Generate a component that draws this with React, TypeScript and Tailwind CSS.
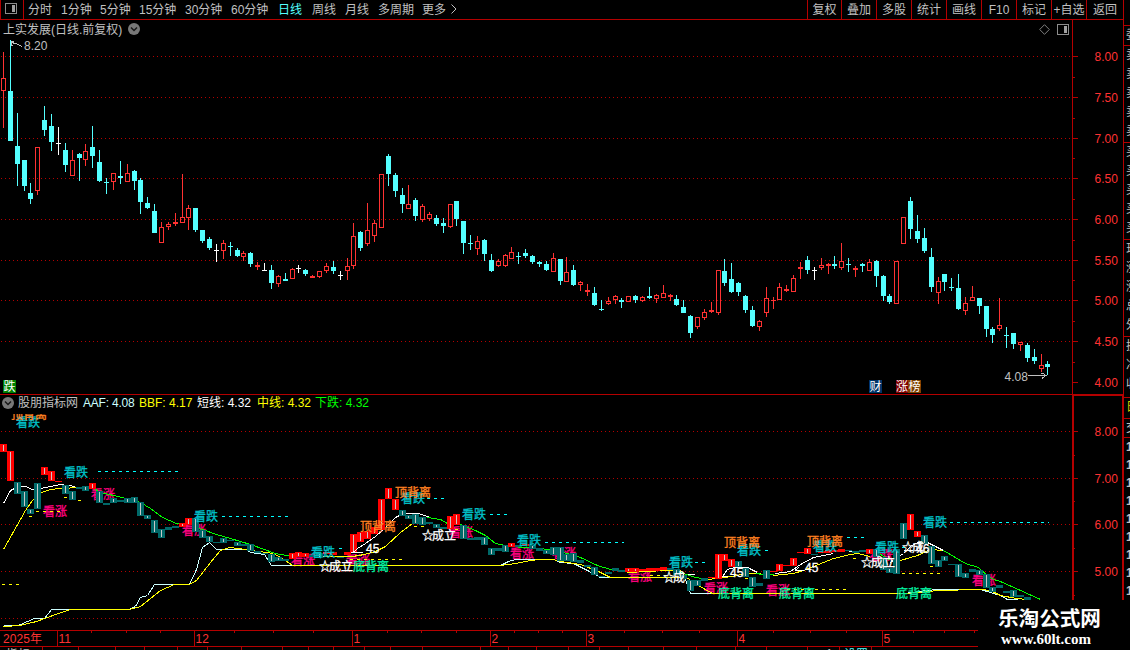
import React from 'react';

const FONT = "font-['Liberation_Sans','Noto_Sans_CJK_SC',sans-serif]";

type Kind = 'u' | 'd' | 'w';
// x, high, low, body top, body bottom, kind (up / down / doji)
type Candle = [number, number, number, number, number, Kind];
// x, top, bottom, kind
type Bar = [number, number, number, 'u' | 'd'];

const candles: Candle[] = [
  [3, 52, 128, 78, 91, 'u'], [10, 40, 141, 91, 141, 'd'], [17, 113, 186, 146, 164, 'd'], [24, 160, 191, 160, 186, 'd'],
  [30, 183, 204, 193, 199, 'd'], [37, 147, 195, 147, 191, 'u'], [44, 106, 136, 120, 130, 'd'], [51, 114, 151, 126, 142, 'd'],
  [58, 127, 155, 143, 144, 'w'], [65, 143, 172, 150, 165, 'd'], [72, 150, 176, 160, 176, 'u'], [79, 153, 181, 154, 158, 'd'],
  [85, 144, 166, 151, 160, 'u'], [92, 126, 168, 147, 156, 'd'], [99, 150, 182, 162, 181, 'd'], [106, 178, 194, 182, 183, 'd'],
  [113, 173, 190, 173, 182, 'u'], [120, 161, 184, 176, 178, 'd'], [127, 164, 182, 173, 182, 'u'], [134, 170, 190, 171, 181, 'd'],
  [140, 178, 214, 180, 202, 'd'], [147, 197, 209, 203, 208, 'd'], [154, 204, 233, 211, 233, 'd'], [161, 222, 243, 227, 243, 'u'],
  [168, 222, 230, 224, 227, 'u'], [175, 213, 226, 222, 224, 'u'], [182, 174, 223, 217, 223, 'u'], [188, 205, 230, 208, 218, 'u'],
  [195, 208, 232, 208, 230, 'd'], [202, 230, 243, 230, 241, 'd'], [209, 237, 250, 239, 248, 'd'], [216, 244, 262, 250, 251, 'w'],
  [223, 240, 259, 243, 251, 'u'], [230, 242, 256, 246, 247, 'd'], [237, 248, 257, 250, 256, 'd'], [243, 251, 261, 253, 257, 'u'],
  [250, 252, 267, 253, 264, 'd'], [257, 262, 270, 265, 267, 'u'], [264, 263, 271, 270, 271, 'w'], [271, 265, 289, 270, 283, 'd'],
  [278, 275, 287, 276, 284, 'u'], [285, 273, 281, 279, 281, 'd'], [292, 268, 279, 269, 279, 'u'], [298, 265, 273, 268, 269, 'w'],
  [305, 269, 276, 270, 274, 'd'], [312, 275, 278, 276, 278, 'u'], [319, 271, 278, 271, 277, 'u'], [326, 263, 273, 266, 271, 'u'],
  [333, 261, 274, 267, 271, 'd'], [340, 271, 280, 275, 276, 'w'], [347, 258, 280, 266, 271, 'u'], [353, 223, 269, 236, 266, 'u'],
  [360, 231, 251, 232, 248, 'd'], [367, 203, 246, 230, 244, 'u'], [374, 220, 242, 223, 236, 'u'], [381, 174, 228, 174, 228, 'u'],
  [388, 154, 186, 156, 174, 'd'], [395, 173, 197, 175, 191, 'd'], [402, 188, 213, 195, 204, 'd'], [408, 185, 209, 204, 209, 'u'],
  [415, 198, 221, 200, 216, 'd'], [422, 204, 222, 206, 220, 'u'], [429, 212, 221, 214, 219, 'u'], [436, 215, 226, 218, 224, 'd'],
  [443, 218, 233, 223, 226, 'd'], [450, 204, 228, 204, 227, 'u'], [456, 201, 226, 201, 219, 'd'], [463, 221, 254, 221, 243, 'd'],
  [470, 235, 250, 243, 244, 'd'], [477, 236, 255, 241, 249, 'u'], [484, 239, 261, 240, 254, 'd'], [491, 254, 272, 260, 271, 'd'],
  [498, 259, 267, 261, 266, 'u'], [505, 254, 267, 255, 266, 'u'], [511, 247, 259, 252, 259, 'u'], [518, 252, 264, 256, 257, 'd'],
  [525, 249, 258, 253, 256, 'd'], [532, 255, 264, 256, 262, 'd'], [539, 261, 267, 262, 264, 'd'], [546, 261, 271, 264, 270, 'd'],
  [553, 253, 272, 258, 272, 'u'], [560, 259, 285, 259, 281, 'd'], [566, 257, 282, 272, 282, 'u'], [573, 265, 286, 270, 285, 'd'],
  [580, 281, 291, 282, 285, 'u'], [587, 284, 296, 290, 292, 'u'], [594, 287, 306, 293, 305, 'd'], [601, 300, 311, 309, 310, 'd'],
  [608, 297, 305, 301, 304, 'u'], [615, 295, 304, 296, 300, 'u'], [621, 298, 308, 300, 302, 'd'], [628, 296, 302, 296, 302, 'u'],
  [635, 295, 303, 296, 300, 'd'], [642, 296, 302, 297, 301, 'u'], [649, 287, 299, 296, 298, 'd'], [656, 294, 303, 295, 299, 'u'],
  [663, 285, 298, 293, 298, 'u'], [670, 294, 301, 295, 297, 'u'], [676, 295, 306, 299, 305, 'd'], [683, 300, 313, 307, 313, 'd'],
  [690, 315, 338, 316, 333, 'd'], [697, 317, 329, 317, 327, 'u'], [704, 309, 320, 312, 318, 'u'], [711, 302, 313, 310, 312, 'u'],
  [718, 270, 315, 270, 313, 'u'], [724, 259, 286, 271, 283, 'd'], [731, 263, 293, 279, 292, 'd'], [738, 282, 296, 283, 292, 'd'],
  [745, 295, 313, 296, 310, 'd'], [752, 306, 327, 310, 326, 'd'], [759, 320, 331, 321, 327, 'u'], [766, 287, 317, 298, 313, 'u'],
  [773, 297, 309, 300, 301, 'u'], [779, 283, 300, 287, 300, 'u'], [786, 285, 292, 289, 291, 'u'], [793, 275, 292, 278, 292, 'u'],
  [800, 262, 279, 267, 269, 'u'], [807, 256, 274, 260, 270, 'd'], [814, 267, 280, 270, 271, 'w'], [821, 258, 270, 265, 268, 'u'],
  [828, 263, 274, 264, 266, 'u'], [834, 256, 269, 264, 266, 'd'], [841, 243, 270, 261, 268, 'u'], [848, 258, 272, 264, 265, 'd'],
  [855, 266, 277, 268, 270, 'u'], [862, 263, 272, 264, 266, 'd'], [869, 259, 271, 262, 271, 'u'], [876, 260, 287, 261, 276, 'd'],
  [883, 275, 301, 276, 296, 'd'], [889, 294, 304, 296, 302, 'd'], [896, 261, 304, 261, 304, 'u'], [903, 217, 244, 217, 244, 'u'],
  [910, 197, 239, 201, 229, 'd'], [917, 215, 243, 231, 239, 'd'], [924, 228, 253, 238, 251, 'd'], [931, 248, 292, 257, 287, 'd'],
  [938, 277, 304, 281, 293, 'u'], [944, 274, 291, 274, 282, 'd'], [951, 278, 291, 287, 288, 'd'], [958, 274, 310, 288, 309, 'd'],
  [965, 297, 315, 303, 311, 'u'], [972, 286, 301, 297, 301, 'u'], [979, 298, 314, 298, 306, 'd'], [986, 306, 337, 306, 329, 'd'],
  [992, 327, 343, 329, 335, 'd'], [999, 298, 331, 325, 329, 'u'], [1006, 327, 348, 335, 336, 'd'], [1013, 333, 349, 333, 344, 'd'],
  [1020, 342, 351, 342, 345, 'u'], [1027, 343, 362, 345, 358, 'd'], [1034, 349, 364, 357, 361, 'd'], [1041, 354, 372, 365, 369, 'u'],
  [1047, 361, 375, 364, 367, 'd'],
];

const bars: Bar[] = [
  [3, 444, 452, 'u'], [10, 451, 481, 'u'], [17, 482, 494, 'd'], [24, 491, 507, 'd'], [30, 509, 514, 'd'], [37, 483, 509, 'd'],
  [44, 467, 475, 'u'], [51, 471, 481, 'u'], [58, 481, 482, 'u'], [65, 485, 494, 'd'], [72, 491, 500, 'd'], [79, 487, 489, 'd'],
  [85, 486, 491, 'd'], [92, 483, 489, 'u'], [99, 491, 503, 'd'], [106, 503, 505, 'd'], [113, 498, 503, 'd'], [120, 500, 502, 'd'],
  [127, 498, 503, 'd'], [134, 497, 503, 'd'], [140, 502, 516, 'd'], [147, 515, 519, 'd'], [154, 520, 533, 'd'], [161, 529, 538, 'd'],
  [168, 527, 530, 'd'], [175, 526, 528, 'd'], [182, 523, 527, 'u'], [188, 518, 525, 'u'], [195, 518, 532, 'd'], [202, 530, 538, 'd'],
  [209, 536, 542, 'd'], [216, 542, 543, 'd'], [223, 538, 543, 'd'], [230, 540, 541, 'd'], [237, 542, 546, 'd'], [243, 544, 546, 'd'],
  [250, 544, 551, 'd'], [257, 551, 553, 'd'], [264, 553, 554, 'd'], [271, 554, 562, 'd'], [278, 557, 561, 'd'], [285, 559, 561, 'd'],
  [292, 553, 559, 'u'], [298, 552, 557, 'u'], [305, 553, 557, 'u'], [312, 555, 557, 'd'], [319, 553, 558, 'd'], [326, 552, 554, 'u'],
  [333, 552, 555, 'u'], [340, 557, 558, 'd'], [347, 552, 555, 'u'], [353, 534, 552, 'u'], [360, 532, 542, 'u'], [367, 531, 539, 'u'],
  [374, 527, 534, 'u'], [381, 499, 530, 'u'], [388, 488, 499, 'u'], [395, 499, 510, 'u'], [402, 510, 516, 'd'], [408, 515, 519, 'd'],
  [415, 514, 524, 'd'], [422, 517, 525, 'd'], [429, 522, 524, 'd'], [436, 524, 528, 'd'], [443, 527, 529, 'd'], [450, 516, 529, 'u'],
  [456, 514, 525, 'u'], [463, 525, 539, 'd'], [470, 538, 540, 'd'], [477, 537, 540, 'd'], [484, 537, 545, 'd'], [491, 548, 555, 'd'],
  [498, 548, 551, 'd'], [505, 545, 552, 'd'], [511, 543, 547, 'u'], [518, 545, 547, 'd'], [525, 544, 546, 'u'], [532, 545, 549, 'd'],
  [539, 548, 551, 'd'], [546, 550, 554, 'd'], [553, 547, 555, 'd'], [560, 547, 561, 'd'], [566, 554, 561, 'd'], [573, 553, 562, 'd'],
  [580, 560, 563, 'd'], [587, 565, 567, 'd'], [594, 567, 575, 'd'], [601, 576, 577, 'd'], [608, 572, 574, 'd'], [615, 568, 571, 'd'],
  [621, 570, 572, 'd'], [628, 568, 572, 'u'], [635, 568, 572, 'u'], [642, 569, 571, 'u'], [649, 568, 571, 'u'], [656, 568, 571, 'u'],
  [663, 567, 570, 'u'], [670, 568, 570, 'd'], [676, 569, 575, 'd'], [683, 575, 579, 'd'], [690, 580, 591, 'd'], [697, 580, 586, 'd'],
  [704, 578, 581, 'd'], [711, 577, 578, 'u'], [718, 554, 579, 'u'], [724, 554, 561, 'u'], [731, 559, 567, 'u'], [738, 561, 567, 'd'],
  [745, 568, 577, 'd'], [752, 577, 587, 'd'], [759, 583, 586, 'd'], [766, 570, 579, 'd'], [773, 571, 572, 'u'], [779, 564, 571, 'u'],
  [786, 565, 566, 'u'], [793, 558, 566, 'u'], [800, 552, 553, 'u'], [807, 548, 554, 'u'], [814, 554, 555, 'd'], [821, 551, 553, 'u'],
  [828, 550, 553, 'u'], [834, 550, 552, 'u'], [841, 549, 552, 'u'], [848, 550, 551, 'd'], [855, 551, 553, 'd'], [862, 550, 552, 'd'],
  [869, 549, 554, 'u'], [876, 549, 557, 'd'], [883, 557, 570, 'd'], [889, 568, 573, 'd'], [896, 549, 574, 'd'], [903, 523, 539, 'd'],
  [910, 514, 530, 'u'], [917, 531, 537, 'u'], [924, 535, 544, 'd'], [931, 546, 564, 'd'], [938, 560, 567, 'd'], [944, 556, 561, 'd'],
  [951, 564, 565, 'd'], [958, 564, 577, 'd'], [965, 573, 578, 'd'], [972, 569, 572, 'd'], [979, 570, 575, 'd'], [986, 574, 588, 'd'],
  [992, 587, 592, 'd'], [999, 585, 588, 'd'], [1006, 591, 593, 'd'], [1013, 590, 597, 'd'], [1020, 595, 597, 'd'], [1027, 597, 600, 'd'],
];

const PALE = '#ccffff';
const YELLOW = '#ffff00';
const GREEN = '#00ff00';
const WHITE = '#ffffff';

const lines: { color: string; points: string }[] = [
  { color: PALE, points: '3,625 18,625 27,621 34,618 44,618 51,609 129,609 135,606 140,597 147,595 154,584 189,584 196,569 202,547 209,542 216,549 246,549 250,552 264,554 271,565 292,565' },
  { color: PALE, points: '500,565 508,561 515,559 553,559 560,562 573,563 587,570 600,577 622,577' },
  { color: PALE, points: '664,569 676,569 683,574 690,593 712,593' },
  { color: PALE, points: '903,593 920,591 926,590 937,589 980,589 990,592 1000,595 1007,599 1017,599' },
  { color: YELLOW, points: '3,626 20,625 36,621 47,617 58,613 70,609 129,609 140,606 150,598 160,590 174,584 189,584 196,580 210,562 220,550 229,547 246,549 257,551 268,552 277,555 285,560 292,565 500,565 515,563 530,560 540,559 553,559 560,561 580,564 598,571 610,577 686,577 703,588 712,593 903,593 920,592 937,590 980,589 990,590 1000,595 1016,598 1027,599' },
  { color: WHITE, points: '3,503 10,490 18,486 25,486 32,489 40,488 50,486 60,484 75,486' },
  { color: YELLOW, points: '3,549 25,510 32,500 38,493 50,489 60,488 80,487' },
  { color: GREEN, points: '92,487 100,492 122,497 140,502 150,508 162,517 176,523 190,524 202,529 216,534 230,538 250,544 275,553 292,556' },
  { color: YELLOW, points: '290,556 352,556 364,554 375,551 385,546 400,532 412,523' },
  { color: WHITE, points: '350,553 357,548 365,543 375,536 385,527 395,517 403,513 418,513 430,517' },
  { color: GREEN, points: '427,517 440,519 447,523 460,524 465,526 475,530 485,535 495,543 505,545 511,546 550,549 567,553 580,557 597,565 610,569 627,571' },
  { color: YELLOW, points: '627,572 647,571 664,570 680,570' },
  { color: GREEN, points: '680,571 683,573 695,577 710,579' },
  { color: YELLOW, points: '707,579 725,577 747,573 760,573' },
  { color: GREEN, points: '756,573 762,574 773,574' },
  { color: YELLOW, points: '773,575 793,573 803,570 813,566 833,558 850,554 857,553 870,556' },
  { color: WHITE, points: '722,576 727,569 734,567 747,567 757,572' },
  { color: WHITE, points: '775,573 790,571 800,564 813,557 833,553' },
  { color: GREEN, points: '877,552 890,560' },
  { color: YELLOW, points: '890,560 900,560 917,555 930,549 943,550' },
  { color: WHITE, points: '890,562 903,553 911,545 918,542 927,542 943,550' },
  { color: WHITE, points: '848,551 869,551' },
  { color: GREEN, points: '943,550 965,563 978,567 987,575 993,579 1000,581 1040,599' },
];

// x1, x2, y
const cyanDashes: [number, number, number][] = [
  [98, 178, 471], [222, 288, 516], [339, 342, 548], [427, 446, 498], [490, 508, 514], [545, 624, 542],
  [695, 708, 562], [765, 768, 550], [847, 865, 537], [902, 905, 547], [950, 1049, 522],
];
const yellowDashes: [number, number, number][] = [
  [2, 20, 584], [29, 32, 516], [36, 60, 511], [64, 67, 497], [78, 81, 500], [350, 404, 559],
  [414, 426, 526], [455, 458, 529], [650, 672, 575], [745, 748, 578], [787, 850, 589], [853, 858, 558], [902, 942, 573], [930, 933, 566],
];

const MAGENTA = '#ff0080';
const CYAN = '#00c0c8';
const ORANGE = '#ff8020';
const MINT = '#00f0a0';

// left edge and vertical centre of each signal
const bullish: [number, number][] = [
  [91, 494], [43, 511], [182, 530], [291, 560], [346, 560], [449, 532], [510, 553], [552, 553],
  [628, 576], [704, 588], [766, 590], [869, 555], [972, 580],
];
const bearish: [number, number][] = [
  [16, 422], [64, 472], [194, 516], [311, 552], [401, 498], [462, 514], [517, 540],
  [669, 562], [737, 550], [813, 546], [875, 547], [923, 522],
];
const marks: [number, number, string, string][] = [
  [11, 414, '顶背离', ORANGE], [360, 526, '顶背离', ORANGE], [395, 492, '顶背离', ORANGE], [724, 542, '顶背离', ORANGE], [807, 541, '顶背离', ORANGE],
  [353, 566, '底背离', MINT], [718, 593, '底背离', MINT], [779, 593, '底背离', MINT], [896, 593, '底背离', MINT],
  [319, 566, '☆', WHITE], [329, 566, '成立', WHITE], [422, 535, '☆', WHITE], [432, 535, '成立', WHITE],
  [663, 577, '☆', WHITE], [673, 577, '成', WHITE], [861, 562, '☆', WHITE], [871, 562, '成立', WHITE],
  [902, 547, '☆', WHITE], [912, 547, '成', WHITE],
  [366, 548, '45', WHITE], [730, 572, '45', WHITE], [805, 567, '45', WHITE], [916, 548, '46', WHITE],
];

const periods: [string, string][] = [
  ['分时', 'w-[33px]'],
  ['1分钟', 'w-[39px]'],
  ['5分钟', 'w-[39px]'],
  ['15分钟', 'w-[46px]'],
  ['30分钟', 'w-[46px]'],
  ['60分钟', 'w-[47px]'],
  ['日线', 'w-[34px]'],
  ['周线', 'w-[33px]'],
  ['月线', 'w-[33px]'],
  ['多周期', 'w-[44px]'],
  ['更多', 'w-[29px]'],
];

const tools = ['复权', '叠加', '多股', '统计', '画线', 'F10', '标记', '+自选', '返回'];

const readings: [string, string][] = [
  ['股朋指标网', 'w-[65px] text-[#c0c0c0]'],
  ['AAF: 4.08', 'w-[56px] tracking-[-0.2px] text-[#ccffff]'],
  ['BBF: 4.17', 'w-[58px] text-[#ffff00]'],
  ['短线: 4.32', 'w-[60px] text-white'],
  ['中线: 4.32', 'w-[58px] text-[#ffff00]'],
  ['下跌: 4.32', 'w-[60px] text-[#00ff00]'],
];

const kindColor: Record<Kind, string> = { u: '#ff3232', d: '#54ffff', w: '#ffffff' };

const PanelIcon: React.FC<{ className?: string }> = ({ className }) => (
  <svg className={className} width="12" height="11" viewBox="0 0 12 11" shapeRendering="crispEdges">
    <rect x="0.5" y="0.5" width="11" height="10" rx="1" fill="none" stroke="#8c8c8c" />
    <rect x="7" y="2" width="3" height="7" fill="#a0a0a0" />
  </svg>
);

const ChevronBadge: React.FC = () => (
  <svg width="12" height="12" viewBox="0 0 12 12" className="shrink-0">
    <circle cx="6" cy="6" r="6" fill="#787878" />
    <path d="M3 4.5 L6 7.5 L9 4.5" fill="none" stroke="#181818" strokeWidth="1.5" />
  </svg>
);

const GridLine: React.FC<{ y: number }> = ({ y }) => (
  <line x1="1" x2="1070" y1={y + 0.5} y2={y + 0.5} stroke="#b40000" strokeDasharray="1 3" />
);

const Dashes: React.FC<{ data: [number, number, number][]; color: string }> = ({ data, color }) => (
  <>
    {data.map(([a, b, y]) => (
      <line key={`${a}-${y}`} x1={a} x2={b} y1={y + 0.5} y2={y + 0.5} stroke={color} strokeDasharray="3 4" />
    ))}
  </>
);

const Label: React.FC<{ x: number; y: number; color: string; text: string }> = ({ x, y, color, text }) => (
  <text x={x} y={y + 4.5} fill={color} stroke={color} strokeWidth="0.3" fontSize="12">
    {text}
  </text>
);

const PriceChart: React.FC = () => (
  <svg width="1072" height="354" viewBox="0 40 1072 354" className="block" shapeRendering="crispEdges">
    {[56, 97, 138, 178, 219, 260, 300, 341].map((y) => (
      <GridLine key={y} y={y} />
    ))}
    {candles.map(([x, high, low, top, bottom, kind]) => {
      const color = kindColor[kind];
      const hollow = kind === 'u' && bottom - top >= 3;
      return (
        <g key={x} fill={color}>
          <rect x={x} y={high} width="1" height={top - high} />
          <rect x={x} y={bottom} width="1" height={low - bottom} />
          {hollow ? (
            <rect x={x - 1.5} y={top + 0.5} width="4" height={bottom - top - 1} fill="none" stroke={color} />
          ) : (
            <rect x={x - 2} y={top} width="5" height={bottom - top} />
          )}
        </g>
      );
    })}
    <path d="M11 41.5 h3 M11 42.5 l5 1 l6 3 M11 42 v3 h2" fill="none" stroke="#c0c0c0" />
    <text x="24" y="50" fontSize="12" fill="#c0c0c0">8.20</text>
    <text x="1004.5" y="381" fontSize="12" fill="#c0c0c0">4.08</text>
    <path d="M1028 375.5 h18 M1041 373.5 h2 l3 2 l-4 3" fill="none" stroke="#c0c0c0" />
    <rect x="3" y="380" width="13" height="13" fill="#008000" />
    <rect x="869" y="380" width="13" height="13" fill="#003468" />
    <rect x="896" y="380" width="12" height="13" fill="#800000" />
    <rect x="908" y="380" width="13" height="13" fill="#804000" />
    <g fontSize="12" fill="#ffffff">
      <text x="3.5" y="391">跌</text>
      <text x="869.5" y="391">财</text>
      <text x="896" y="391">涨</text>
      <text x="908.5" y="391">榜</text>
    </g>
  </svg>
);

const IndicatorChart: React.FC = () => (
  <svg width="1072" height="216" viewBox="0 414 1072 216" className="block" shapeRendering="crispEdges">
    {[431, 478, 524, 571, 618].map((y) => (
      <GridLine key={y} y={y} />
    ))}
    {bullish.map(([x, y]) => (
      <Label key={x} x={x} y={y} color={MAGENTA} text="看涨" />
    ))}
    {lines.map(({ color, points }) => (
      <polyline key={points} points={points} fill="none" stroke={color} transform="translate(0.5 0.5)" />
    ))}
    {bars.map(([x, top, bottom, kind]) => (
      <g key={x}>
        <rect x={x - 3} y={top} width="7" height={bottom - top} fill={kind === 'u' ? '#ff0000' : '#006868'} />
        {bottom - top > 3 && <rect x={x} y={top + 1} width="1" height={bottom - top - 2} fill="#c8c8c8" />}
      </g>
    ))}
    <Dashes data={cyanDashes} color="#00ffff" />
    <Dashes data={yellowDashes} color="#ffff00" />
    {bearish.map(([x, y]) => (
      <Label key={x} x={x} y={y} color={CYAN} text="看跌" />
    ))}
    {marks.map(([x, y, text, color]) => (
      <Label key={`${x}-${y}`} x={x} y={y} color={color} text={text} />
    ))}
    <path d="M353 552.5 h10 M357 549.5 l-4 3 M722 576.5 h6 M795 570.5 h9 M799 567.5 l-4 3 M904 550.5 h9 M688 574.5 h7" fill="none" stroke="#ffffff" />
  </svg>
);

const AxisLabel: React.FC<{ y: number; text: string }> = ({ y, text }) => (
  <>
    <line x1="1073" x2="1078" y1={y + 0.5} y2={y + 0.5} stroke="#b40000" />
    <text x="1094.5" y={y + 5} fontSize="12" fill="#ff3232" textLength="23.5">
      {text}
    </text>
  </>
);

const PriceAxis: React.FC = () => (
  <svg width="51" height="374" viewBox="1072 20 51 374" className="block" shapeRendering="crispEdges">
    <line x1="1072.5" x2="1072.5" y1="20" y2="394" stroke="#b40000" />
    {[56, 97, 138, 178, 219, 260, 300, 341, 382].map((y, i) => (
      <AxisLabel key={y} y={y} text={(8 - i * 0.5).toFixed(2)} />
    ))}
    {[77, 118, 158, 199, 240, 280, 321, 362].map((y) => (
      <rect key={y} x="1073" y={y} width="2" height="1" fill="#b40000" />
    ))}
  </svg>
);

const IndicatorAxis: React.FC = () => (
  <svg width="51" height="236" viewBox="1072 394 51 236" className="block" shapeRendering="crispEdges">
    <rect x="1072" y="394" width="51" height="2" fill="#b40000" />
    <rect x="1072" y="394" width="2" height="236" fill="#b40000" />
    <rect x="1122" y="394" width="1" height="236" fill="#b40000" />
    {[431, 478, 524, 571].map((y, i) => (
      <AxisLabel key={y} y={y} text={(8 - i).toFixed(2)} />
    ))}
    {[455, 501, 548, 595].map((y) => (
      <rect key={y} x="1074" y={y} width="1" height="1" fill="#b40000" />
    ))}
  </svg>
);

const months: [number, string][] = [
  [57, '11'], [194, '12'], [352, '1'], [490, '2'], [586, '3'], [737, '4'], [882, '5'],
];

const TimeAxis: React.FC = () => (
  <svg width="1123" height="20" viewBox="0 630 1123 20" className="block" shapeRendering="crispEdges">
    <rect x="0" y="630" width="1123" height="1" fill="#b40000" />
    <rect x="0" y="646" width="1123" height="1" fill="#b40000" />
    {[91, 126, 160, 234, 273, 313, 387, 421, 456, 514, 538, 562, 624, 662, 699, 773, 810, 846, 913, 944, 974].map((x) => (
      <rect key={x} x={x} y="631" width="1" height="2" fill="#b40000" />
    ))}
    {[42, 78, 115, 144, 177, 207, 241, 282, 308, 333, 364, 390, 422, 480, 508, 536, 568, 599, 628, 663, 696, 735, 766, 807, 839, 871].map((x) => (
      <rect key={x} x={x} y="647" width="1" height="3" fill="#b40000" />
    ))}
    <text x="3" y="643" fontSize="12" fill="#ff3232" textLength="39">2025年</text>
    {months.map(([x, text]) => (
      <g key={x}>
        <rect x={x} y="631" width="1" height="15" fill="#b40000" />
        <text x={x + 1.5} y="643" fontSize="12" fill="#ff3232">{text}</text>
      </g>
    ))}
    {/* tops of the next row of tabs */}
    <g fontSize="12" fill="#c0c0c0">
      <text x="6" y="659">指标</text>
      <text x="48" y="659">A</text>
      <text x="826" y="658">1</text>
      <text x="844" y="659" fill="#54ffff">设置</text>
    </g>
  </svg>
);

// Left edge of the quote panel, cut off by the window
const quoteRows: { rows: string[]; className: string }[] = [
  { rows: ['委'], className: 'h-[20px] text-[#c0c0c0]' },
  { rows: ['卖', '卖', '卖', '卖', '卖'], className: 'h-[97px] text-[#c0c0c0]' },
  { rows: ['买', '买', '买', '买', '买'], className: 'h-[97px] text-[#c0c0c0]' },
  { rows: ['现', '涨', '涨', '总', '外'], className: 'h-[97px] text-[#c0c0c0]' },
  { rows: ['换', '净', '收'], className: 'h-[61px] text-[#c0c0c0]' },
  { rows: ['日'], className: 'h-[21px] text-[#d0d000]' },
  { rows: ['交'], className: 'h-[19px] text-[#c0c0c0]' },
];

const QuoteStrip: React.FC = () => (
  <aside className="flex h-[650px] w-[7px] flex-col overflow-hidden border-l border-[#b40000] pt-[25px] text-[12px] leading-[19px]">
    {quoteRows.map(({ rows, className }, i) => (
      <div key={i} className={`flex shrink-0 flex-col border-t border-[#b40000] pl-[2px] ${className}`}>
        {rows.map((row, j) => (
          <span key={j} className="h-[19px] w-[12px] shrink-0">
            {row}
          </span>
        ))}
      </div>
    ))}
    <div className="flex flex-col border-t border-[#b40000] pl-[2px] leading-[18px] font-bold text-[#c0c0c0]">
      {Array.from({ length: 9 }, (_, i) => (
        <span key={i} className="h-[18px] shrink-0">
          14:5
        </span>
      ))}
    </div>
  </aside>
);

const App: React.FC = () => {
  return (
    <div className={`relative flex h-[650px] w-[1130px] overflow-hidden bg-black text-[12px] text-[#c0c0c0] ${FONT}`}>
      <div className="flex w-[1123px] flex-col">
        <header className="flex h-[20px] border-b border-[#b40000] leading-[21px] whitespace-nowrap">
          <div className="flex w-[24px] border-x border-[#b40000] pt-[3px] pl-[4px]">
            <PanelIcon />
          </div>
          <nav className="flex flex-1 pl-[4px]">
            {periods.map(([name, width]) => (
              <span key={name} className={`${width} h-[19px] shrink-0 ${name === '日线' ? 'text-[#54ffff]' : ''}`}>
                {name}
              </span>
            ))}
            <svg width="6" height="10" viewBox="0 0 6 10" className="mt-[4px]">
              <path d="M0.5 0.5 L5 5 L0.5 9.5" fill="none" stroke="#c0c0c0" />
            </svg>
          </nav>
          <div className="flex">
            {tools.map((tool) => (
              <span
                key={tool}
                className={`${tool === '返回' ? 'w-[37px]' : tool === '复权' ? 'w-[34px]' : 'w-[35px]'} h-[19px] border-l border-[#b40000] text-center`}
              >
                {tool}
              </span>
            ))}
          </div>
        </header>

        {/* Daily candles */}
        <section className="flex h-[374px]">
          <div className="w-[1072px]">
            <div className="flex h-[20px] items-center pl-[3px] leading-[19px]">
              <span className="mr-[6px]">上实发展(日线.前复权)</span>
              <span className="mb-[2px]">
                <ChevronBadge />
              </span>
              <svg width="11" height="11" viewBox="0 0 11 11" className="mb-px ml-auto">
                <path d="M5.5 0.7 L10.3 5.5 L5.5 10.3 L0.7 5.5 Z" fill="none" stroke="#808080" />
              </svg>
              <PanelIcon className="mr-[3px] mb-px ml-[7px]" />
            </div>
            <PriceChart />
          </div>
          <PriceAxis />
        </section>

        {/* Indicator */}
        <section className="flex h-[236px]">
          <div className="w-[1072px]">
            <div className="flex h-[20px] items-start border-t border-[#b40000] pl-[2px] leading-[17px] whitespace-nowrap">
              <span className="w-[16px] shrink-0 pt-[2px]">
                <ChevronBadge />
              </span>
              {readings.map(([text, style]) => (
                <span key={text} className={`shrink-0 ${style}`}>
                  {text}
                </span>
              ))}
            </div>
            <IndicatorChart />
          </div>
          <IndicatorAxis />
        </section>

        <TimeAxis />
      </div>

      <QuoteStrip />

      {/* Site badge covering the corner */}
      <div className="absolute right-0 bottom-0 flex h-[50px] w-[152px] flex-col bg-black pt-[7px] pl-[20px] font-bold text-white">
        <span className="text-[20.6px] leading-[24px]">乐淘公式网</span>
        <span className="pl-[3px] font-['Liberation_Serif',serif] text-[15px] leading-[16px]">www.60lt.com</span>
      </div>
    </div>
  );
};

export default App;
